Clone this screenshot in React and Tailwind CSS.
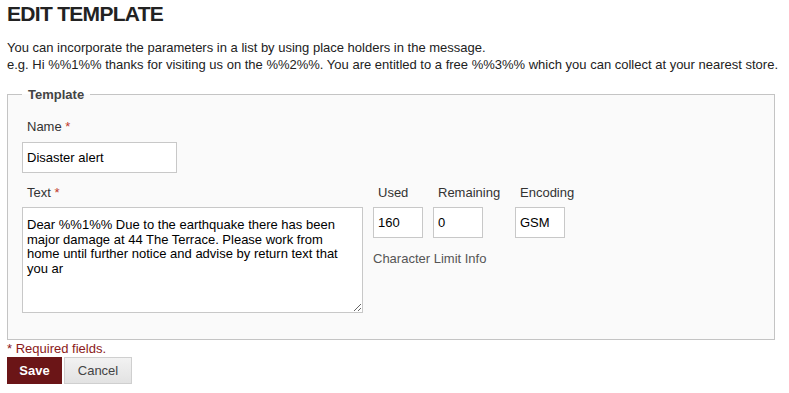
import React from 'react';

const font = { fontFamily: '"Liberation Sans", Arial, sans-serif' };

const Label = ({ children, required = false, className = '' }) => (
    <div className={`pl-[5px] text-[13px] leading-[15px] text-[#333] ${className}`}>
        {children}
        {required && <span className="text-[#c0392b]"> *</span>}
    </div>
);

const Box = ({ value, className = '' }) => (
    <input
        readOnly
        value={value}
        className={`h-[31px] border border-[#c8c8c8] bg-white px-[4px] text-[13px] text-black outline-none ${className}`}
    />
);

const message =
    'Dear %%1%% Due to the earthquake there has been\nmajor damage at 44 The Terrace. Please work from\nhome until further notice and advise by return text that\nyou ar';

export default function App() {
    return (
        <div className="min-h-[393px] w-[789px] bg-white pl-[7px] text-[#222]" style={font}>
            <h1 className="pt-[2px] text-[21px] font-bold leading-[24px] tracking-[-0.7px] text-[#222]">
                EDIT TEMPLATE
            </h1>
            <p className="mt-[13px] text-[13px] leading-[17px]">
                You can incorporate the parameters in a list by using place holders in the message.
                <br />
                e.g. Hi %%1%% thanks for visiting us on the %%2%%. You are entitled to a free %%3%% which you can collect at your nearest store.
            </p>

            <fieldset className="mt-[14px] w-[768px] border border-[#c4c4c4] bg-[#fafafa] pb-[26px] pl-[14px] pt-[17px]">
                <legend className="px-[6px] text-[13px] font-bold leading-[15px] text-[#444]">Template</legend>

                <Label required>Name</Label>
                <Box value="Disaster alert" className="mt-[8px] w-[155px]" />

                <div className="mt-[12px] flex">
                    <div className="w-[341px]">
                        <Label required>Text</Label>
                        <textarea
                            readOnly
                            value={message}
                            className="mt-[7px] block h-[106px] w-[341px] border border-[#c8c8c8] bg-white px-[4px] pt-[10px] text-[13px] leading-[14.6px] text-black outline-none"
                        />
                    </div>
                    <div className="ml-[10px]">
                        <div className="flex">
                            <div className="w-[50px]">
                                <Label>Used</Label>
                                <Box value="160" className="mt-[7px] w-[50px]" />
                            </div>
                            <div className="ml-[10px] w-[72px]">
                                <Label>Remaining</Label>
                                <Box value="0" className="mt-[7px] w-[50px]" />
                            </div>
                            <div className="ml-[10px] w-[60px]">
                                <Label>Encoding</Label>
                                <Box value="GSM" className="mt-[7px] w-[50px]" />
                            </div>
                        </div>
                        <div className="mt-[13px] text-[13px] leading-[15px] text-[#555]">Character Limit Info</div>
                    </div>
                </div>
            </fieldset>

            <div className="mt-[1px] text-[13px] leading-[15px] text-[#8b1a1a]">* Required fields.</div>
            <div className="mt-[1px] flex gap-[2px]">
                <button className="h-[27px] w-[55px] bg-[#6b1517] text-[13px] font-bold text-white">Save</button>
                <button className="h-[27px] w-[68px] border border-[#cfcfcf] bg-gradient-to-b from-[#f2f2f2] to-[#e2e2e2] text-[13px] text-[#444]">
                    Cancel
                </button>
            </div>
        </div>
    );
}
